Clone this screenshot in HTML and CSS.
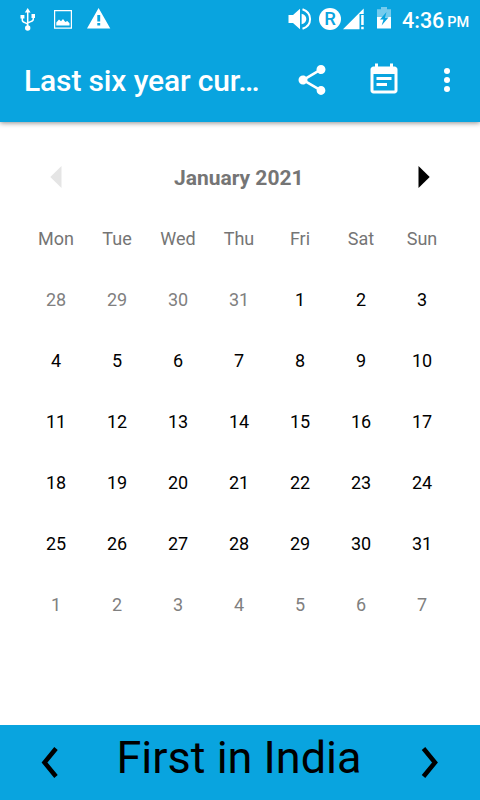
FILE: index.html
```
<!DOCTYPE html>
<html lang="en">
<head>
<meta charset="utf-8">
<title>Calendar</title>
<link rel="stylesheet" href="styles.css">
</head>
<body>
<header class="top">
  <div class="status">
    <svg class="usb" width="16" height="24" viewBox="0 0 16 24" fill="none" stroke="#fff" stroke-width="1.5"><path d="M7.7 3v17M2.3 8v4q0 2 2.200 2.400l3.200 1.800M13.300 8v3q0 2-2.200 2.400L7.700 15"/><path d="M7.700 0l2.900 4.500H4.800zM.5 7h3.900v3.500H.5zM11.500 6h3.500v4h-3.500z" fill="#fff" stroke="none"/><circle cx="7.700" cy="20" r="2.700" fill="#fff" stroke="none"/></svg>
    <svg class="image" width="18" height="19" viewBox="0 0 18 19"><path d="M.6.6h16.800v17.600H.6z" fill="none" stroke="#fff" stroke-width="1.200"/><path d="M2.300 15.500v-3l2.700-3 2 1.800 2-2.300 2.300 3 2-1 2.200 2.200v2.300z" fill="#fff"/></svg>
    <svg class="warning" width="24" height="21" viewBox="0 0 24 21"><path fill="#fff" fill-rule="evenodd" d="M11.600 0L23.300 20.500H0zM10.300 7h2.900v6.500h-2.900zM10.300 15h2.900v2.600h-2.900z"/></svg>
    <svg class="sound" width="24" height="23" viewBox="0 0 24 23"><path fill="#fff" d="M.5 7H5l7-6.300v20.600L5 15H.5z"/><path d="M13.600 5.700q4.700 1.300 4.700 5.300t-4.700 5.300" fill="#fff"/><path d="M14.500 1.200q7.600 2.600 7.600 9.800t-7.600 9.800" fill="none" stroke="#fff" stroke-width="2"/></svg>
    <span class="roaming">R</span>
    <svg class="signal" width="22" height="22" viewBox="0 0 22 22"><path fill="#fff" d="M0 21.200L20.700.5V6H16.500v15.200zM18.200 7h2.500v10h-2.500zM18.200 18.700h2.500v2.500h-2.500z"/></svg>
    <svg class="battery" width="15" height="22" viewBox="0 0 15 22"><path fill="#75cbed" d="M0 2.300h4V0h6v2.300h4V11H0z"/><path fill="#fff" d="M0 10h14v11.500H0z"/><path fill="#09a4df" d="M9.500 5L3 12.500h3.500L4.600 18.500 11.500 10.500H8z"/></svg>
    <span class="time">4:36</span><span class="pm">PM</span>
  </div>
  <div class="toolbar">
    <h1>Last six year cur…</h1>
    <svg class="share" width="36" height="36" viewBox="0 0 24 24" fill="#fff"><path d="M18 16.080c-.76 0-1.440.3-1.960.77L8.910 12.700c.05-.23.09-.46.09-.7s-.04-.47-.09-.7l7.050-4.110c.54.5 1.250.81 2.040.81 1.660 0 3-1.340 3-3s-1.340-3-3-3-3 1.340-3 3c0 .24.040.47.090.7L8.040 9.810C7.500 9.310 6.790 9 6 9c-1.660 0-3 1.340-3 3s1.340 3 3 3c.79 0 1.500-.31 2.040-.81l7.120 4.160c-.05.21-.08.43-.08.65 0 1.610 1.310 2.920 2.920 2.920s2.920-1.310 2.920-2.920-1.310-2.920-2.920-2.920z"/></svg>
    <svg class="note" width="36" height="36" viewBox="0 0 24 24" fill="#fff"><path d="M17 10H7v2h10v-2zm2-7h-1V1h-2v2H8V1H6v2H5c-1.110 0-1.990.9-1.990 2L3 19c0 1.100.89 2 2 2h14c1.100 0 2-.9 2-2V5c0-1.100-.9-2-2-2zm0 16H5V8h14v11zm-5-5H7v2h7v-2z"/></svg>
    <svg class="more" width="36" height="36" viewBox="0 0 24 24" fill="#fff"><circle cx="12" cy="6" r="2"/><circle cx="12" cy="12" r="2"/><circle cx="12" cy="18" r="2"/></svg>
  </div>
</header>
<main class="calendar">
  <div class="month">
    <svg width="12" height="22" viewBox="0 0 12 22"><path d="M11.500 0v22L.3 11z" fill="#e5e5e5"/></svg>
    <h2>January 2021</h2>
    <svg width="12" height="22" viewBox="0 0 12 22"><path d="M.5 0v22L11.700 11z" fill="#000"/></svg>
  </div>
  <div class="grid">
    <span class="name">Mon</span><span class="name">Tue</span><span class="name">Wed</span><span class="name">Thu</span><span class="name">Fri</span><span class="name">Sat</span><span class="name">Sun</span>
    <span class="other">28</span><span class="other">29</span><span class="other">30</span><span class="other">31</span><span>1</span><span>2</span><span>3</span>
    <span>4</span><span>5</span><span>6</span><span>7</span><span>8</span><span>9</span><span>10</span>
    <span>11</span><span>12</span><span>13</span><span>14</span><span>15</span><span>16</span><span>17</span>
    <span>18</span><span>19</span><span>20</span><span>21</span><span>22</span><span>23</span><span>24</span>
    <span>25</span><span>26</span><span>27</span><span>28</span><span>29</span><span>30</span><span>31</span>
    <span class="other">1</span><span class="other">2</span><span class="other">3</span><span class="other">4</span><span class="other">5</span><span class="other">6</span><span class="other">7</span>
  </div>
</main>
<footer class="bottom">
  <svg width="18" height="34" viewBox="0 0 18 34"><path d="M15 2.500L3.500 16.500l11.500 14" fill="none" stroke="#000" stroke-width="4.500"/></svg>
  <p>First in India</p>
  <svg width="18" height="34" viewBox="0 0 18 34"><path d="M2.500 2.500l11.500 14L2.500 30.500" fill="none" stroke="#000" stroke-width="4.500"/></svg>
</footer>
</body>
</html>
```
FILE: styles.css
```
* { box-sizing: border-box; }
body {
  margin: 0;
  width: 480px;
  height: 800px;
  display: flex;
  flex-direction: column;
  overflow: hidden;
  background: #fff;
  font-family: Roboto, sans-serif;
  color: #000;
}
h1, h2, p { margin: 0; }
svg { display: block; flex: none; }
.top {
  height: 122px;
  background: #09a4df;
  color: #fff;
  box-shadow: 0 1px 5px rgba(0, 0, 0, .45);
}
.status {
  height: 38px;
  display: flex;
  align-items: flex-start;
  padding-left: 20px;
}
.usb { margin-top: 8px; }
.image { margin: 10px 0 0 18px; }
.warning { margin: 8px 0 0 15px; }
.sound { margin: 8px 0 0 177px; }
.roaming {
  width: 22px;
  height: 22px;
  margin: 8px 0 0 7px;
  border-radius: 50%;
  background: #fff;
  color: #09a4df;
  font-size: 18.500px;
  font-weight: 500;
  line-height: 23px;
  text-align: center;
}
.signal { margin: 8px 0 0 2px; }
.battery { margin: 7px 0 0 12px; }
.time {
  margin: 8px 0 0 10px;
  font-size: 21.500px;
  font-weight: 500;
  line-height: 26px;
}
.pm {
  margin: 13px 0 0 3px;
  font-size: 14.500px;
  font-weight: 500;
  line-height: 20px;
}
.toolbar {
  height: 84px;
  display: flex;
  align-items: center;
  padding-left: 24px;
}
h1 {
  width: 270px;
  font-size: 30px;
  font-weight: 500;
  line-height: 36px;
  letter-spacing: -.14px;
  padding-top: 2px;
  white-space: nowrap;
}
.note { margin-left: 36px; }
.more { margin-left: 27px; }
.calendar { flex: 1; padding: 24px 25.500px 0; }
.month {
  height: 62px;
  display: flex;
  align-items: center;
  justify-content: space-between;
  padding: 0 24px 0 24.500px;
}
h2 {
  color: #757575;
  font-size: 21px;
  font-weight: 700;
  line-height: 26px;
  padding: 1px 3px 0 0;
}
.grid {
  display: grid;
  grid-template-columns: repeat(7, 61px);
  grid-auto-rows: 61px;
}
.grid span {
  font-size: 18px;
  line-height: 61px;
  text-align: center;
}
.grid .name { color: #757575; }
.grid .other { color: #808080; }
.bottom {
  height: 75px;
  display: flex;
  align-items: center;
  justify-content: space-between;
  padding: 0 41px;
  background: #09a4df;
}
.bottom p {
  height: 75px;
  padding-right: 2px;
  font-size: 45px;
  line-height: 65px;
}
```
